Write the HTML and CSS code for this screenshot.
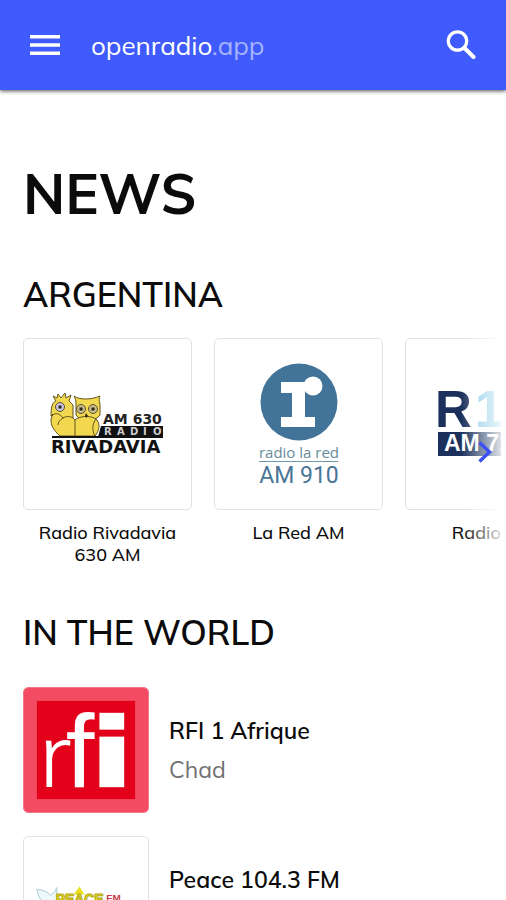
FILE: index.html
```html
<!DOCTYPE html>
<html lang="en">
<head>
<meta charset="utf-8">
<meta name="viewport" content="width=device-width, initial-scale=1">
<title>News - openradio.app</title>
<link rel="stylesheet" href="styles.css">
</head>
<body>
<header class="topbar">
  <button class="icon-button" type="button" aria-label="Menu">
    <svg width="30" height="20" viewBox="0 0 30 20"><path fill="currentColor" d="M0 0h30v3.500H0zM0 8.200h30v3.500H0zM0 16.400h30v3.500H0z"/></svg>
  </button>
  <a class="brand" href="#">openradio<span class="brand-suffix">.app</span></a>
  <button class="icon-button search" type="button" aria-label="Search">
    <svg width="30" height="30" viewBox="0 0 30 30" fill="none" stroke="currentColor"><circle cx="11.500" cy="11" r="9.200" stroke-width="3.200"/><path stroke-width="4" stroke-linecap="round" d="M19 18.500 27.500 27"/></svg>
  </button>
</header>
<main class="page">
  <h1 class="title">NEWS</h1>
  <section class="section">
    <h2 class="heading">ARGENTINA</h2>
    <div class="carousel">
      <div class="track">
        <a class="station" href="#">
          <span class="cover">
            <svg viewBox="0 0 167 170" role="img" aria-label="Radio Rivadavia logo">
              <g fill="#f1d84f" stroke="#63551f" stroke-width="1">
                <path d="M32 62l-3-5 4 2 1-4 3 4 4-5 1 5 5-3-2 6 4 4v13H33l-4-4-2 2c0-8 1-14 5-15z"/>
                <path d="M52 65c0-4-1-6-2-8 5 4 17 4 26 0-1 2-1 5 0 8v11c-4 7-20 7-24 0z"/>
                <path d="M28 77c4-5 9-1 11 2 5-3 10-1 12 2 4-4 15-5 21-1 5 5 3 12-1 17H36c-7-6-11-13-8-20z"/>
                <path d="M51 81v16M39 79c-3 2-5 4-5 7M72 80c-4 5-4 12-1 17" fill="none"/>
              </g>
              <g stroke="#5c5230"><circle cx="36" cy="68" r="4.500" fill="#c9c4df"/><circle cx="57" cy="70" r="4.500" fill="#c8bb87"/><circle cx="69" cy="70" r="4.500" fill="#c8bb87"/></g>
              <path fill="#29231c" d="M34.500 66.500h3v3h-3zM55.500 68.500h3v3h-3zM67.500 68.500h3v3h-3zM62 74l2 3-2 2-1-2z"/>
              <path fill="#111" d="M77 87h62v11H74zM28 97h111v2H28z"/>
              <text class="riv-am" x="79" y="85">AM 630</text>
              <text class="riv-radio" y="96"><tspan x="80">R</tspan><tspan x="93">A</tspan><tspan x="106">D</tspan><tspan x="119">I</tspan><tspan x="129">O</tspan></text>
              <text class="riv-name" x="27" y="114">RIVADAVIA</text>
            </svg>
          </span>
          <span class="label">Radio Rivadavia 630 AM</span>
        </a>
        <a class="station" href="#">
          <span class="cover">
            <svg viewBox="0 0 167 170" role="img" aria-label="La Red logo">
              <circle cx="84" cy="63" r="38.500" fill="#427398"/>
              <g fill="#fff"><circle cx="98" cy="47" r="9.500"/><rect x="66" y="43" width="22" height="11"/><rect x="77" y="43" width="13" height="44"/><rect x="66" y="78" width="34" height="10"/></g>
              <text class="red-name" x="84" y="119">radio la red</text>
              <path d="M44 122.500h79" stroke="#6f9aa5"/>
              <text class="red-am" x="84" y="144">AM 910</text>
            </svg>
          </span>
          <span class="label">La Red AM</span>
        </a>
        <a class="station" href="#">
          <span class="cover">
            <svg viewBox="0 0 167 170" role="img" aria-label="Radio 10 logo">
              <text class="ten-name" x="29" y="88">R<tspan x="69" fill="#83c7e5">10</tspan></text>
              <rect x="32" y="93" width="104" height="24" fill="#1b315c"/>
              <text class="ten-am" x="38" y="112">AM 710</text>
            </svg>
          </span>
          <span class="label">Radio 10</span>
        </a>
      </div>
      <button class="next" type="button" aria-label="Next stations">
        <svg width="14" height="22" viewBox="0 0 14 22" fill="none" stroke="currentColor" stroke-width="3.400"><path d="M1.500 1.500 11.500 11 1.500 20.500"/></svg>
      </button>
    </div>
  </section>
  <section class="section">
    <h2 class="heading">IN THE WORLD</h2>
    <ul class="list">
      <li><a class="row" href="#">
        <span class="thumb thumb-rfi">
          <svg viewBox="0 0 125 125" role="img" aria-label="RFI logo">
            <rect width="125" height="125" fill="#f34b61"/><rect x="13" y="13" width="99" height="99" fill="#e2001a"/>
            <text class="rfi-r" x="15" y="100">r</text>
            <text class="rfi-f" x="42" y="100">f</text>
            <g fill="#fff"><rect x="76" y="25" width="25" height="17"/><rect x="76" y="49" width="25" height="51"/></g>
          </svg>
        </span>
        <span class="info"><span class="name">RFI 1 Afrique</span><span class="place">Chad</span></span>
      </a></li>
      <li><a class="row" href="#">
        <span class="thumb">
          <svg viewBox="0 0 125 125" role="img" aria-label="Peace FM logo">
            <path d="M13 53c6 0 11 2 14 6l4-4 2-4v12l-7 6c-7-2-11-6-13-16z" fill="#eef9fb" stroke="#a8cbd3"/>
            <path d="M50 58l6-8 5 8z" fill="#eadf24"/>
            <text class="peace" x="32" y="68">PEACE</text>
            <text class="peace-fm" x="83" y="65">FM</text>
          </svg>
        </span>
        <span class="info"><span class="name">Peace 104.3 FM</span><span class="place">Ghana</span></span>
      </a></li>
    </ul>
  </section>
</main>
</body>
</html>
```
FILE: styles.css
```css
* { box-sizing: border-box; }
html { height: 100%; }
body {
  display: flex;
  flex-direction: column;
  height: 100%;
  margin: 0;
  overflow: hidden;
  background: #fff;
  color: #0b0b0b;
  font-family: Mulish, Muli, Nunito, Lato, sans-serif;
}
a { color: inherit; text-decoration: none; }
button { padding: 0; border: 0; background: none; color: inherit; cursor: pointer; }
svg { display: block; }

.topbar {
  display: flex;
  flex: none;
  align-items: center;
  height: 90px;
  padding: 0 30px;
  background: #3f5bfd;
  color: #fff;
  box-shadow: 0 1px 4px rgba(0, 0, 0, .7);
}
.icon-button { flex: none; }
.brand { margin-left: 31px; padding-top: 2px; font-size: 26px; line-height: 32px; }
.brand-suffix { color: #a6b3fe; }
.search { margin-left: auto; }

.page { flex: 1; min-height: 0; padding: 71px 0 0 23px; overflow: hidden; }
.title { margin: 0 0 48px; font-size: 56px; font-weight: 700; line-height: 64px; }
.section { margin-bottom: 45px; }
.heading { margin: 0 0 21px; font-size: 34px; font-weight: 600; line-height: 44px; }

.carousel { position: relative; margin-right: 5px; overflow: hidden; }
.carousel::after {
  content: "";
  position: absolute;
  inset: 0 0 0 auto;
  width: 40px;
  background: linear-gradient(to right, rgba(255, 255, 255, 0), rgba(255, 255, 255, .85));
}
.track { display: flex; gap: 22px; }
.station { flex: none; width: 169px; text-align: center; }
.cover { display: block; overflow: hidden; border: 1px solid #e2e2e2; border-radius: 5px; }
.label { display: block; padding: 12px 8px 0; font-size: 18px; font-weight: 500; line-height: 22px; }
.next { position: absolute; z-index: 1; top: 103px; right: 9px; color: #3c50f5; }

.list { display: grid; gap: 23px; margin: 0; padding: 11px 0 0; list-style: none; }
.row { display: flex; align-items: center; gap: 20px; }
.thumb { flex: none; width: 126px; overflow: hidden; border: 1px solid #e2e2e2; border-radius: 5px; }
.thumb-rfi { border-color: #f0778a; }
.info { display: grid; gap: 8px; padding-top: 2px; }
.name { font-size: 23px; font-weight: 600; line-height: 30px; }
.place { color: #707070; font-size: 23px; line-height: 32px; }

.riv-am { font: bold 14px "DejaVu Sans", sans-serif; fill: #222; }
.riv-radio { font: bold 10px "DejaVu Sans", sans-serif; fill: #ccc; }
.riv-name { font: bold 18px "DejaVu Sans", sans-serif; fill: #111; }
.red-name { font: 15px "Open Sans", sans-serif; fill: #668d9a; text-anchor: middle; }
.red-am { font: 23px Roboto, sans-serif; fill: #4a7595; text-anchor: middle; }
.ten-name { font: bold 51px "Liberation Sans", sans-serif; fill: #1b315c; }
.ten-am { font: bold 23px "Liberation Sans", sans-serif; fill: #fff; }
.rfi-r { font: 300 92px Mulish, Lato, sans-serif; fill: #fff; }
.rfi-f { font: 104px "Liberation Sans", sans-serif; fill: #fff; }
.peace { font: bold 14px "Liberation Sans", sans-serif; fill: #eadf24; stroke: #b6a813; }
.peace-fm { font: bold 10px "Liberation Sans", sans-serif; fill: #c93a43; }
```
